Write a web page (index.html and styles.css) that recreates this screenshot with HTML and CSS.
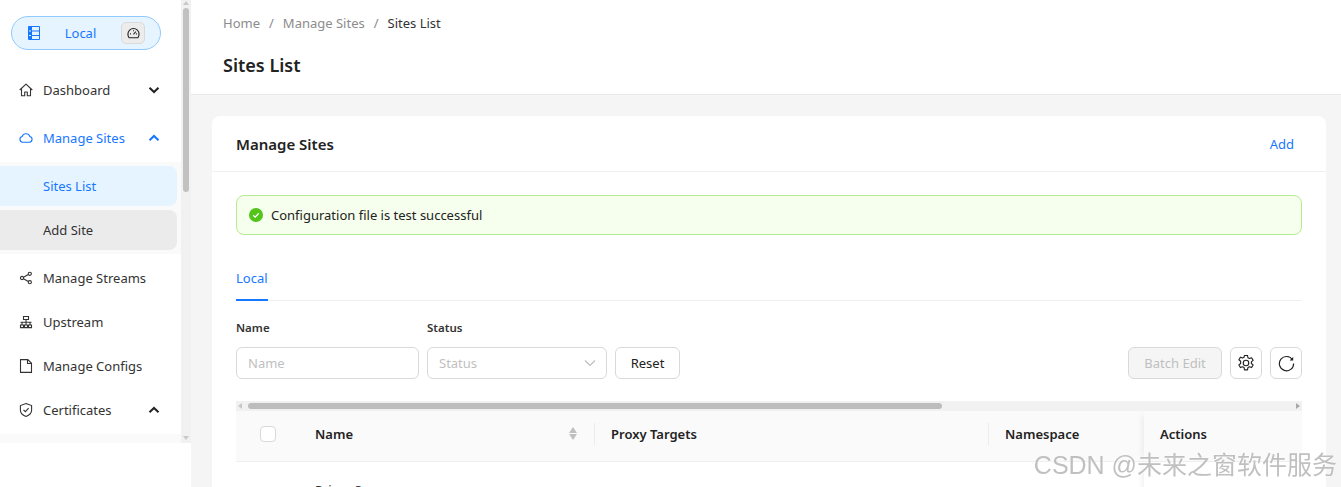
FILE: index.html
```html
<!DOCTYPE html>
<html lang="en">
<head>
<meta charset="utf-8">
<title>Sites List</title>
<link rel="stylesheet" href="styles.css">
</head>
<body>
<div class="app">
  <aside class="sider">
    <div class="sider-scroll">
      <div class="menu-wrap">
        <div class="env">
          <svg class="env-icon" viewBox="0 0 12 14" width="12" height="14"><path d="M.5.5h11v13H.5zM3.500.5v13M3.500 5h8M3.500 9.500h8" fill="none" stroke="#1677ff"/><path d="M1 1h2v3.500H1zM1 5.500h2v3.500H1zM1 10h2v3H1z" fill="#1677ff"/></svg>
          <span class="env-name">Local</span>
          <span class="env-btn"><svg viewBox="0 0 14 14" width="13" height="13"><path d="M2.200 11.600A6 6 0 0 1 1 7.400 6 6 0 0 1 7 1.600a6 6 0 0 1 6 5.800c0 1.600-.4 3-1.200 4.200z" fill="none" stroke="#222" stroke-width="1.200" stroke-linejoin="round"/><path d="M7 8l2.500-3M3.200 7.400h1M9.800 7.400h1M7 3.500v1" stroke="#222" stroke-width="1.100" fill="none"/></svg></span>
        </div>
        <nav class="menu">
          <a class="item item-gap">
            <svg class="ico" viewBox="0 0 14 14"><path d="M.7 7L7 1.200 13.300 7M2.500 5.600v7.200h3.200V9h2.600v3.800h3.200V5.600" fill="none" stroke="#333" stroke-width="1.100" stroke-linejoin="round"/></svg>
            <span class="label">Dashboard</span>
            <svg class="chev" viewBox="0 0 12 8"><path d="M1.500 1.700L6 6l4.500-4.300" fill="none" stroke="#222" stroke-width="2"/></svg>
          </a>
          <a class="item is-active">
            <svg class="ico" viewBox="0 0 14 14"><path d="M3.700 11.200a2.900 2.900 0 0 1-.6-5.700A4.100 4.100 0 0 1 7 2.800a4.100 4.100 0 0 1 3.900 2.700 2.900 2.900 0 0 1-.6 5.700z" fill="none" stroke="#1677ff" stroke-width="1.100"/></svg>
            <span class="label">Manage Sites</span>
            <svg class="chev" viewBox="0 0 12 8"><path d="M1.500 6.300L6 2l4.500 4.300" fill="none" stroke="#1677ff" stroke-width="2"/></svg>
          </a>
          <div class="submenu">
            <a class="subitem is-selected">Sites List</a>
            <a class="subitem is-hover">Add Site</a>
          </div>
          <a class="item">
            <svg class="ico" viewBox="0 0 14 14"><g fill="none" stroke="#333" stroke-width="1.100"><circle cx="3" cy="7" r="1.600"/><circle cx="10.800" cy="2.800" r="1.600"/><circle cx="10.800" cy="11.200" r="1.600"/><path d="M4.400 6.200l5-2.700M4.400 7.800l5 2.700"/></g></svg>
            <span class="label">Manage Streams</span>
          </a>
          <a class="item">
            <svg class="ico" viewBox="0 0 14 14"><g fill="none" stroke="#333" stroke-width="1.100"><path d="M4.500 1.500h5v3h-5zM1.500 10h3v2.600h-3zM5.500 10h3v2.600h-3zM9.500 10h3v2.600h-3z"/><path d="M1.500 7.200h11M7 4.500V10M3 7.200V10M11 7.200V10"/></g></svg>
            <span class="label">Upstream</span>
          </a>
          <a class="item">
            <svg class="ico" viewBox="0 0 14 14"><path d="M1.500.6h7.300L12.500 4.300v9.100h-11zM8.500.8v3.700h4" fill="none" stroke="#333" stroke-width="1.100"/></svg>
            <span class="label">Manage Configs</span>
          </a>
          <a class="item">
            <svg class="ico" viewBox="0 0 14 14"><path d="M7 .6l5.600 2v4.700c0 3-2.700 5.100-5.600 6.100-2.900-1-5.600-3.100-5.600-6.100V2.600z" fill="none" stroke="#333" stroke-width="1.100"/><path d="M4.500 6.800L6.400 8.700 9.600 5.200" fill="none" stroke="#333" stroke-width="1.100"/></svg>
            <span class="label">Certificates</span>
            <svg class="chev" viewBox="0 0 12 8"><path d="M1.500 6.300L6 2l4.500 4.300" fill="none" stroke="#222" stroke-width="2"/></svg>
          </a>
          <div class="submenu submenu-tail"></div>
        </nav>
      </div>
      <div class="vbar">
        <span class="arrow arrow-up"></span>
        <span class="vthumb"></span>
        <span class="arrow arrow-down"></span>
      </div>
    </div>
  </aside>
  <main class="main">
    <header class="page-head">
      <div class="crumbs">
        <span>Home</span><i>/</i><span>Manage Sites</span><i>/</i><span class="crumb-now">Sites List</span>
      </div>
      <h1 class="page-title">Sites List</h1>
    </header>
    <section class="content">
      <div class="card">
        <div class="card-head">
          <h2 class="card-title">Manage Sites</h2>
          <a class="link">Add</a>
        </div>
        <div class="card-body">
          <div class="alert">
            <svg class="alert-ico" viewBox="0 0 14 14" width="14" height="14"><circle cx="7" cy="7" r="7" fill="#52c41a"/><path d="M4.200 7.200L6.200 9.100 9.800 5.200" fill="none" stroke="#fff" stroke-width="1.300"/></svg>
            <span>Configuration file is test successful</span>
          </div>
          <div class="tabs"><span class="tab">Local</span></div>
          <div class="filters">
            <div class="field field-name">
              <label class="field-label">Name</label>
              <div class="input">Name</div>
            </div>
            <div class="field field-status">
              <label class="field-label">Status</label>
              <div class="input select">Status
                <svg class="select-arrow" viewBox="0 0 12 8"><path d="M1 1.500L6 6.500l5-5" fill="none" stroke="#bbb" stroke-width="1.100"/></svg>
              </div>
            </div>
            <button class="btn btn-reset">Reset</button>
            <div class="tools">
              <button class="btn btn-disabled">Batch Edit</button>
              <button class="btn btn-icon"><svg viewBox="1 1 14 14" width="16" height="16"><path d="M6.700 1.400h2.600l.4 2 1.300.7 1.900-.7 1.300 2.300-1.500 1.300v1.400l1.500 1.300-1.300 2.300-1.900-.7-1.300.7-.4 2H6.700l-.4-2-1.300-.7-1.900.7-1.300-2.300 1.500-1.300V6.500L1.800 5.200l1.300-2.300 1.900.7 1.300-.7z" fill="none" stroke="#222" stroke-width="1" stroke-linejoin="round"/><circle cx="8" cy="8" r="2.400" fill="none" stroke="#222" stroke-width="1"/></svg></button>
              <button class="btn btn-icon"><svg viewBox="0 0 16 16" width="17" height="17"><path d="M13.700 4.600A6.700 6.700 0 1 0 14.700 8" fill="none" stroke="#222" stroke-width="1.100"/><path d="M14.300 1.800v3.400h-3.400z" fill="#222"/></svg></button>
            </div>
          </div>
          <div class="table">
            <div class="hbar">
              <span class="harrow harrow-l"></span>
              <span class="hthumb"></span>
              <span class="harrow harrow-r"></span>
            </div>
            <div class="thead">
              <div class="th th-check"><span class="check"></span></div>
              <div class="th th-name">Name
                <span class="sorter"><span class="sort-up"></span><span class="sort-down"></span></span>
              </div>
              <div class="th th-proxy">Proxy Targets</div>
              <div class="th th-ns">Namespace</div>
              <div class="th th-actions">Actions</div>
            </div>
            <div class="tbody">
              <div class="td-name">Prime Server</div>
              <div class="td-actions"></div>
            </div>
          </div>
        </div>
      </div>
    </section>
  </main>
</div>
<div class="watermark">CSDN @未来之窗软件服务</div>
</body>
</html>
```
FILE: styles.css
```css
* { box-sizing: border-box; }
html, body { margin: 0; height: 487px; overflow: hidden; }
body {
  font-family: "Noto Sans", "Noto Sans CJK SC", sans-serif;
  font-size: 13px;
  color: #333;
  background: #f5f5f5;
}
.app { display: flex; height: 487px; }

.sider { width: 191px; flex: none; background: #fff; }
.sider-scroll { display: flex; height: 443px; overflow: hidden; }
.menu-wrap { width: 181px; flex: none; padding-top: 16px; }
.env {
  display: flex; align-items: center;
  width: 150px; height: 34px; margin-left: 11px; padding: 0 15px 0 16px;
  background: #e6f4ff; border: 1px solid #91caff; border-radius: 17px;
  color: #1677ff;
}
.env-icon { flex: none; }
.env-name { flex: 1; text-align: center; }
.env-btn {
  display: flex; align-items: center; justify-content: center;
  width: 24px; height: 22px;
  background: #ececec; border: 1px solid #d9d9d9; border-radius: 5px;
}
.menu { margin-top: 20px; }
.item {
  display: flex; align-items: center;
  height: 40px; margin-bottom: 4px; padding: 0 21px 0 19px;
}
.item-gap { margin-bottom: 8px; }
.ico { width: 14px; height: 14px; flex: none; margin-right: 10px; }
.label { flex: 1; white-space: nowrap; }
.chev { width: 12px; height: 8px; flex: none; }
.is-active { color: #1677ff; }
.submenu { background: #fafafa; padding: 4px 4px 4px 0; margin-bottom: 4px; }
.subitem {
  display: block; height: 40px; line-height: 40px; padding-left: 43px;
  border-radius: 0 8px 8px 0;
}
.subitem + .subitem { margin-top: 4px; }
.is-selected { background: #e6f4ff; color: #1677ff; }
.is-hover { background: #ebebeb; }
.submenu-tail { height: 20px; margin: 0; padding: 0; }

.vbar { position: relative; width: 10px; flex: none; background: #f1f1f1; }
.vthumb { position: absolute; left: 2px; top: 8px; width: 6px; height: 184px; background: #c1c1c1; border-radius: 3px; }
.arrow { position: absolute; left: 2px; width: 0; height: 0; border-left: 3px solid transparent; border-right: 3px solid transparent; }
.arrow-up { top: 1px; border-bottom: 4px solid #c8c8c8; }
.arrow-down { bottom: 3px; border-top: 4px solid #c8c8c8; }

.main { flex: 1; min-width: 0; display: flex; flex-direction: column; }
.page-head { flex: none; height: 95px; background: #fff; border-bottom: 1px solid #e8e8e8; padding: 13px 32px 0; }
.crumbs { display: flex; align-items: center; height: 20px; color: #8c8c8c; }
.crumbs i { font-style: normal; margin: 0 9px; }
.crumb-now { color: #333; }
.page-title { margin: 19px 0 0; font-size: 18px; line-height: 26px; font-weight: 600; color: #222; }

.content { flex: none; padding: 21px 15px 0 21px; }
.card { background: #fff; border-radius: 8px; height: 400px; overflow: hidden; }
.card-head {
  display: flex; align-items: center; justify-content: space-between;
  height: 56px; padding: 0 32px 0 24px; border-bottom: 1px solid #f0f0f0;
}
.card-title { margin: 0; font-size: 15px; font-weight: 600; color: #222; }
.link { color: #1677ff; }
.card-body { padding: 23px 24px 0; }
.alert {
  display: flex; align-items: center; gap: 8px;
  height: 40px; padding: 0 12px;
  background: #f6ffed; border: 1px solid #b7eb8f; border-radius: 8px; color: #222;
}
.alert-ico { flex: none; }
.tabs { height: 66px; border-bottom: 1px solid #f0f0f0; display: flex; align-items: flex-end; }
.tab { display: block; padding-bottom: 11px; line-height: 20px; color: #1677ff; border-bottom: 2px solid #1677ff; margin-bottom: -1px; }
.filters { display: flex; align-items: flex-end; height: 78px; }
.field { display: flex; flex-direction: column; margin-right: 8px; }
.field-name { width: 183px; }
.field-status { width: 180px; }
.field-label { font-size: 11.500px; font-weight: 600; color: #333; line-height: 16px; margin-bottom: 11px; }
.input {
  position: relative; height: 32px; line-height: 30px; padding: 0 11px;
  border: 1px solid #d9d9d9; border-radius: 6px; color: #bfbfbf; background: #fff;
}
.select-arrow { position: absolute; right: 10px; top: 11px; width: 12px; height: 8px; }
.btn {
  font: inherit; height: 32px; padding: 0; color: #222; background: #fff;
  border: 1px solid #d9d9d9; border-radius: 6px;
}
.btn-reset { width: 65px; }
.tools { display: flex; gap: 8px; margin-left: auto; }
.btn-disabled { width: 94px; background: #f5f5f5; color: #bfbfbf; }
.btn-icon { width: 32px; display: flex; align-items: center; justify-content: center; }

.table { position: relative; margin-top: 22px; }
.hbar { position: relative; height: 10px; background: #f1f1f1; }
.hthumb { position: absolute; left: 12px; top: 2px; width: 694px; height: 6px; border-radius: 3px; background: #bdbdbd; }
.harrow { position: absolute; top: 2px; width: 0; height: 0; border-top: 3px solid transparent; border-bottom: 3px solid transparent; }
.harrow-l { left: 2px; border-right: 4px solid #c8c8c8; }
.harrow-r { right: 2px; border-left: 4px solid #a8a8a8; }
.thead { display: flex; height: 51px; background: #fafafa; border-bottom: 1px solid #f0f0f0; font-weight: 600; color: #222; }
.th { display: flex; align-items: center; position: relative; padding-bottom: 4px; }
.th-check { width: 63px; padding-left: 24px; padding-bottom: 0; }
.check { width: 16px; height: 16px; background: #fff; border: 1px solid #d9d9d9; border-radius: 4px; margin-bottom: 4px; }
.th-name { width: 296px; padding-left: 16px; }
.th-proxy { width: 394px; padding-left: 16px; }
.th-ns { width: 155px; padding-left: 16px; }
.th-name::after, .th-proxy::after {
  content: ""; position: absolute; right: 0; top: 12px; width: 1px; height: 22px; background: #ececec;
}
.th-actions {
  width: 158px; padding-left: 16px;
  background: #fafafa; box-shadow: -6px 0 6px -4px rgba(0,0,0,.06);
}
.sorter { position: absolute; right: 18px; top: 16px; display: flex; flex-direction: column; gap: 1px; }
.sort-up { width: 0; height: 0; border-left: 4px solid transparent; border-right: 4px solid transparent; border-bottom: 6px solid #bfbfbf; }
.sort-down { width: 0; height: 0; border-left: 4px solid transparent; border-right: 4px solid transparent; border-top: 6px solid #bfbfbf; }
.tbody { position: relative; display: flex; justify-content: space-between; padding-left: 79px; }
.td-name { padding-top: 18px; line-height: 20px; color: #333; width: 100px; white-space: nowrap; }
.td-actions { width: 158px; height: 60px; background: #fff; box-shadow: -6px 0 6px -4px rgba(0,0,0,.06); }

.watermark {
  position: fixed; right: 4px; bottom: 7px;
  font-family: "Liberation Sans", "Noto Sans CJK SC", sans-serif;
  font-size: 25px; line-height: 30px; color: rgba(140,140,140,.55);
  text-shadow: 0 0 2px rgba(255,255,255,.9); white-space: nowrap;
}
```
